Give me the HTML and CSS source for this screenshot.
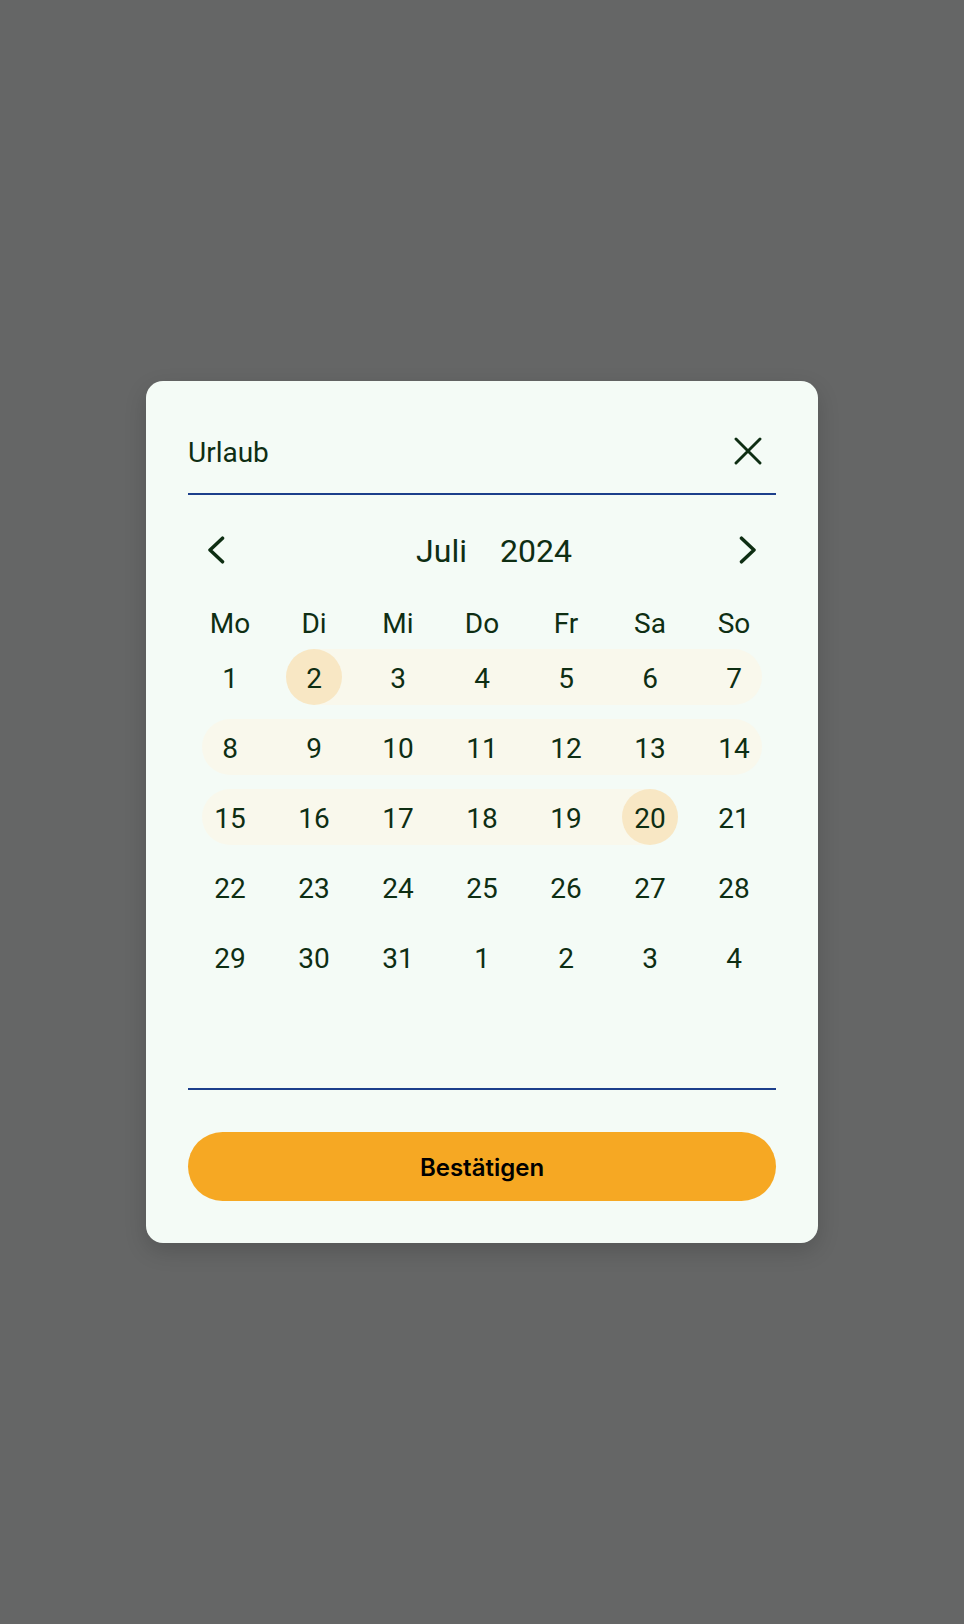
FILE: index.html
```html
<!DOCTYPE html>
<html lang="de">
<head>
<meta charset="utf-8">
<title>Urlaub</title>
<link rel="stylesheet" href="styles.css">
</head>
<body>
<div class="overlay">
  <div class="dialog">
    <div class="field">
      <span class="field-label">Urlaub</span>
      <button class="icon-btn close" aria-label="Schließen">
        <svg width="28" height="28" viewBox="0 0 28 28"><path d="M2 2 L26 26 M26 2 L2 26" stroke="#0e2e13" stroke-width="2.9" stroke-linecap="round" fill="none"/></svg>
      </button>
    </div>

    <div class="calendar">
      <div class="cal-head">
        <button class="nav-btn" aria-label="Vorheriger Monat">
          <svg width="18" height="28" viewBox="0 0 18 28"><path d="M15.5 2.2 L3 14 L15.5 25.8" stroke="#0e2e13" stroke-width="3.5" stroke-linecap="round" stroke-linejoin="round" fill="none"/></svg>
        </button>
        <div class="cal-title"><span>Juli</span><span>2024</span></div>
        <button class="nav-btn" aria-label="Nächster Monat">
          <svg width="18" height="28" viewBox="0 0 18 28"><path d="M2.5 2.2 L15 14 L2.5 25.8" stroke="#0e2e13" stroke-width="3.5" stroke-linecap="round" stroke-linejoin="round" fill="none"/></svg>
        </button>
      </div>

      <div class="weekdays">
        <span>Mo</span><span>Di</span><span>Mi</span><span>Do</span><span>Fr</span><span>Sa</span><span>So</span>
      </div>

      <div class="days">
        <div class="day"><span class="num">1</span></div>
        <div class="day r start sel"><span class="num">2</span></div>
        <div class="day r"><span class="num">3</span></div>
        <div class="day r"><span class="num">4</span></div>
        <div class="day r"><span class="num">5</span></div>
        <div class="day r"><span class="num">6</span></div>
        <div class="day r last"><span class="num">7</span></div>

        <div class="day r first"><span class="num">8</span></div>
        <div class="day r"><span class="num">9</span></div>
        <div class="day r"><span class="num">10</span></div>
        <div class="day r"><span class="num">11</span></div>
        <div class="day r"><span class="num">12</span></div>
        <div class="day r"><span class="num">13</span></div>
        <div class="day r last"><span class="num">14</span></div>

        <div class="day r first"><span class="num">15</span></div>
        <div class="day r"><span class="num">16</span></div>
        <div class="day r"><span class="num">17</span></div>
        <div class="day r"><span class="num">18</span></div>
        <div class="day r"><span class="num">19</span></div>
        <div class="day r end sel"><span class="num">20</span></div>
        <div class="day"><span class="num">21</span></div>

        <div class="day"><span class="num">22</span></div>
        <div class="day"><span class="num">23</span></div>
        <div class="day"><span class="num">24</span></div>
        <div class="day"><span class="num">25</span></div>
        <div class="day"><span class="num">26</span></div>
        <div class="day"><span class="num">27</span></div>
        <div class="day"><span class="num">28</span></div>

        <div class="day"><span class="num">29</span></div>
        <div class="day"><span class="num">30</span></div>
        <div class="day"><span class="num">31</span></div>
        <div class="day other"><span class="num">1</span></div>
        <div class="day other"><span class="num">2</span></div>
        <div class="day other"><span class="num">3</span></div>
        <div class="day other"><span class="num">4</span></div>
      </div>
    </div>

    <button class="confirm">Bestätigen</button>
  </div>
</div>
</body>
</html>
```

FILE: styles.css
```css
* {
  box-sizing: border-box;
}

html, body {
  margin: 0;
  padding: 0;
}

body {
  background: #656666;
  font-family: Roboto, "Liberation Sans", sans-serif;
  color: #0e2e13;
}

.overlay {
  min-height: 1624px;
  display: flex;
  align-items: center;
  justify-content: center;
}

.dialog {
  width: 672px;
  height: 862px;
  background: #f4fbf6;
  border-radius: 17px;
  padding: 56px 42px 42px;
  box-shadow: 0 8px 22px rgba(0, 0, 0, 0.16);
  display: flex;
  flex-direction: column;
}

.field {
  display: flex;
  align-items: center;
  justify-content: space-between;
  height: 58px;
  padding-bottom: 28px;
  border-bottom: 2px solid #1c3f8b;
}

.field-label {
  font-size: 28px;
  line-height: 28px;
  padding-top: 3px;
  color: #0e2e13;
}

.icon-btn {
  border: 0;
  background: none;
  padding: 0;
  margin-right: 14px;
  width: 28px;
  height: 28px;
  display: flex;
  cursor: pointer;
}

.calendar {
  border-bottom: 2px solid #1c3f8b;
  padding-bottom: 103px;
}

.cal-head {
  margin-top: 31px;
  height: 48px;
  display: flex;
  align-items: center;
}

.nav-btn {
  width: 56px;
  height: 48px;
  border: 0;
  background: none;
  padding: 0;
  display: flex;
  align-items: center;
  justify-content: center;
  cursor: pointer;
}

.cal-title {
  flex: 1;
  display: flex;
  justify-content: center;
  gap: 33px;
  padding-left: 24px;
  padding-top: 2px;
  font-size: 32px;
  line-height: 48px;
  color: #0e2e13;
}

.weekdays {
  margin-top: 26px;
  height: 42px;
  display: grid;
  grid-template-columns: repeat(7, 84px);
  align-items: center;
  font-size: 28px;
  line-height: 42px;
}

.weekdays span {
  text-align: center;
  padding-top: 3px;
}

.days {
  margin-top: 7px;
  display: grid;
  grid-template-columns: repeat(7, 84px);
  grid-auto-rows: 56px;
  row-gap: 14px;
}

.day {
  position: relative;
  display: flex;
  align-items: center;
  justify-content: center;
}

.day.r::before {
  content: "";
  position: absolute;
  top: 0;
  bottom: 0;
  left: 0;
  right: 0;
  background: #f9f8ec;
}

.day.r.first::before {
  left: 14px;
  border-radius: 28px 0 0 28px;
}

.day.r.last::before {
  right: 14px;
  border-radius: 0 28px 28px 0;
}

.day.r.start::before {
  left: 50%;
}

.day.r.end::before {
  right: 50%;
}

.num {
  position: relative;
  width: 56px;
  height: 56px;
  border-radius: 50%;
  display: flex;
  align-items: center;
  justify-content: center;
  padding-top: 3px;
  font-size: 28px;
  line-height: 1;
}

.day.sel .num {
  background: #f8e7c4;
}

.confirm {
  margin-top: 42px;
  height: 69px;
  width: 100%;
  border: 0;
  border-radius: 35px;
  background: #f6a823;
  color: #000;
  font-family: Inter, Roboto, sans-serif;
  font-weight: 600;
  font-size: 24px;
  padding-top: 2px;
  cursor: pointer;
}
```
